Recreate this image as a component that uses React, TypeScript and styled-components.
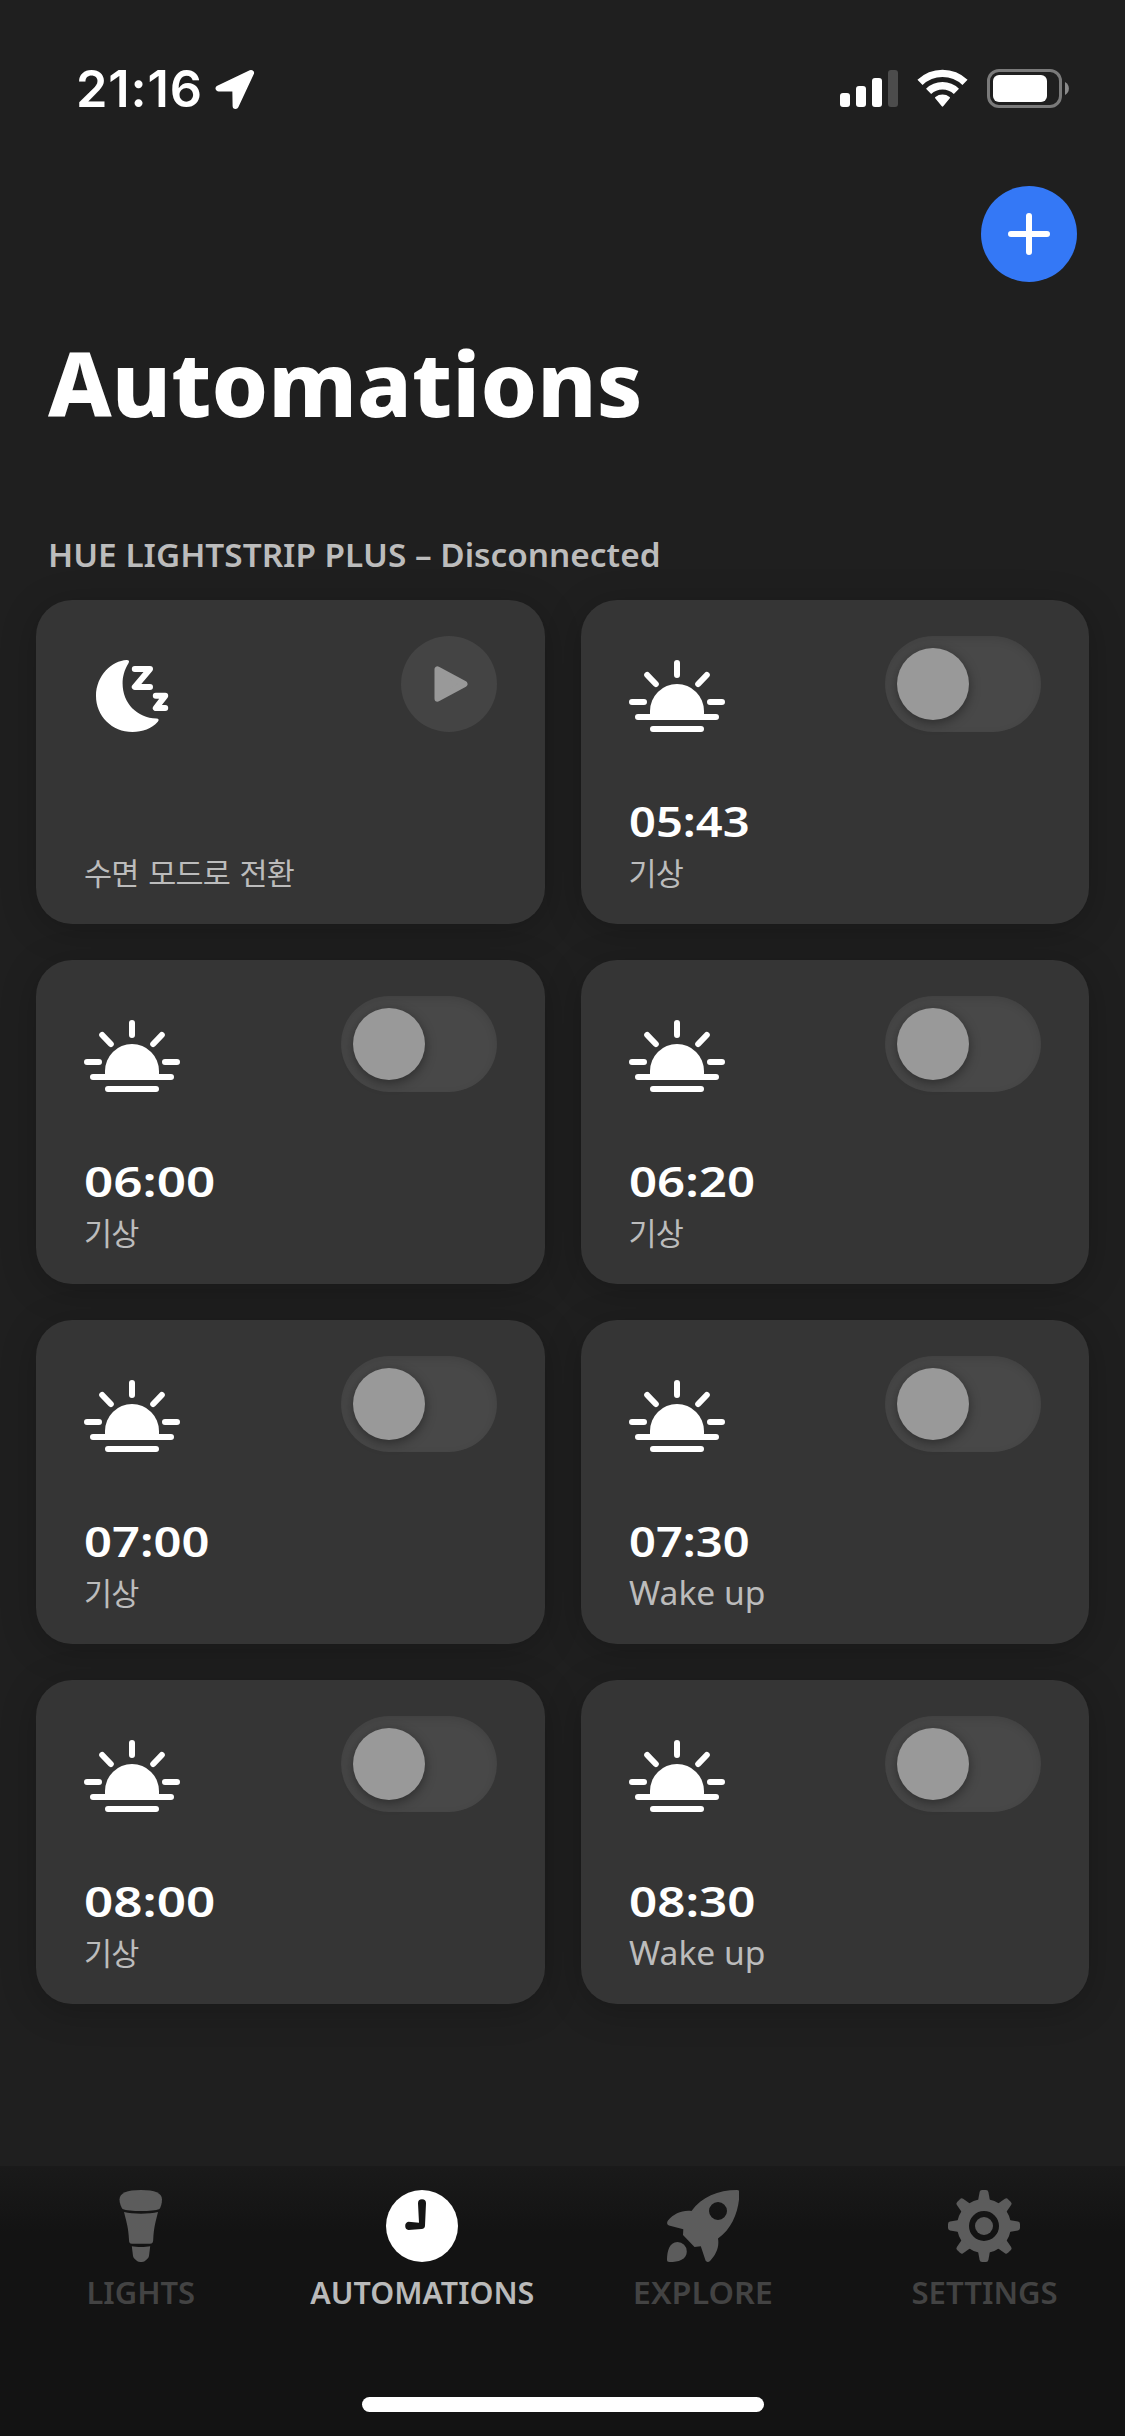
import React from "react";
import styled, { createGlobalStyle } from "styled-components";

const latin = `"Noto Sans", "Noto Sans CJK KR", sans-serif`;

const GlobalStyle = createGlobalStyle`
  * { box-sizing: border-box; }
  body { margin: 0; background: #1f1f1f; font-family: ${latin}; }
`;

const Screen = styled.div`
  display: flex;
  flex-direction: column;
  width: 1125px;
  height: 2436px;
  background: #1f1f1f;
  color: #fff;
  overflow: hidden;
`;

const StatusBar = styled.div`
  display: flex;
  align-items: center;
  justify-content: space-between;
  height: 132px;
  padding: 45px 56px 0 76px;
`;

const StatusLeft = styled.div`
  display: flex;
  align-items: center;
  height: 87px;
  gap: 13px;
`;

const Clock = styled.span`
  width: 126px;
  font-family: Inter, sans-serif;
  font-size: 50.5px;
  font-weight: 600;
  line-height: 87px;
  letter-spacing: 0.9px;
  white-space: nowrap;
`;

const StatusRight = styled.div`
  display: flex;
  align-items: center;
  height: 87px;
  gap: 19px;
`;

const Header = styled.div`
  display: flex;
  justify-content: flex-end;
  padding: 54px 48px 0;
`;

const AddButton = styled.button`
  display: grid;
  place-items: center;
  width: 96px;
  height: 96px;
  padding: 0;
  border: 0;
  border-radius: 50%;
  background: #3478f6;
`;

const Title = styled.h1`
  margin: 39px 48px 0;
  height: 122px;
  font-size: 90px;
  font-weight: 800;
  line-height: 122px;
  letter-spacing: 0.1px;
  white-space: nowrap;
`;

const SectionTitle = styled.h2`
  align-self: flex-start;
  margin: 88px 48px 0;
  height: 69px;
  font-size: 32px;
  font-weight: 600;
  line-height: 48px;
  color: #bcbcbc;
  white-space: nowrap;
  transform: scaleX(1.042);
  transform-origin: left;
`;

const Grid = styled.main`
  display: grid;
  grid-template-columns: 1fr 1fr;
  grid-auto-rows: 324px;
  gap: 36px;
  padding: 0 36px;
  flex: 1;
  align-content: start;
`;

const Card = styled.article`
  display: flex;
  flex-direction: column;
  justify-content: space-between;
  padding: 36px 48px 30px;
  border-radius: 36px;
  background: #353535;
  box-shadow: 0 6px 36px rgba(0, 0, 0, 0.22);
`;

const CardTop = styled.div`
  display: flex;
  justify-content: space-between;
  align-items: flex-start;
`;

const IconSlot = styled.div`
  display: flex;
  width: 96px;
  margin-top: 24px;
`;

const CardText = styled.div`
  display: flex;
  flex-direction: column;
  align-items: flex-start;
`;

const Time = styled.div<{ $stretch: number }>`
  height: 58px;
  font-size: 42px;
  font-weight: 600;
  line-height: 54px;
  transform: scaleX(${(p) => p.$stretch});
  transform-origin: left;
`;

const Label = styled.div<{ $korean: boolean }>`
  height: 42px;
  font-size: ${(p) => (p.$korean ? 30.5 : 32)}px;
  line-height: 42px;
  letter-spacing: ${(p) => (p.$korean ? -0.8 : 0)}px;
  word-spacing: ${(p) => (p.$korean ? 2.5 : 0)}px;
  color: #bcbcbc;
  white-space: nowrap;
  transform: ${(p) => (p.$korean ? "none" : "scaleX(1.05)")};
  transform-origin: left;
`;

const PlayButton = styled.button`
  display: grid;
  place-items: center;
  width: 96px;
  height: 96px;
  padding: 0;
  border: 0;
  border-radius: 50%;
  background: #444;
`;

const Toggle = styled.div`
  display: flex;
  align-items: center;
  width: 156px;
  height: 96px;
  padding: 12px;
  border-radius: 48px;
  background: #484848;
  box-shadow: inset 0 3px 9px rgba(0, 0, 0, 0.1);
`;

const Knob = styled.div`
  width: 72px;
  height: 72px;
  border-radius: 50%;
  background: #999;
  box-shadow: 0 3px 12px rgba(0, 0, 0, 0.4);
`;

const TabBar = styled.nav`
  display: grid;
  grid-template-columns: repeat(4, 1fr);
  height: 231px;
  padding-top: 24px;
  background: linear-gradient(#1a1a1a, #131313 66px);
`;

const Tab = styled.div<{ $active?: boolean }>`
  display: flex;
  flex-direction: column;
  align-items: center;
  gap: 11px;
  color: ${(p) => (p.$active ? "#fff" : "#5c5c5c")};
`;

const TabLabel = styled.span<{ $active?: boolean; $stretch: number }>`
  font-size: 30px;
  font-weight: 600;
  line-height: 40px;
  transform: scaleX(${(p) => p.$stretch});
  color: ${(p) => (p.$active ? "#bababa" : "#434343")};
`;

const HomeArea = styled.div`
  display: flex;
  justify-content: center;
  height: 39px;
  background: #131313;
`;

const HomeIndicator = styled.div`
  width: 402px;
  height: 15px;
  border-radius: 8px;
  background: #fff;
`;

const LocationIcon = () => (
  <svg width="40" height="40" viewBox="0 0 40 40" fill="#fff" stroke="#fff" strokeWidth="6" strokeLinejoin="round">
    <path d="M36 4 L3.6 19.5 L20.3 19.5 L20.6 37 Z" />
  </svg>
);

const SignalIcon = () => (
  <svg width="58" height="39" viewBox="0 0 58 39" fill="#fff">
    <rect x="0" y="24" width="10" height="14" rx="3" />
    <rect x="16" y="17" width="10" height="21" rx="3" />
    <rect x="32" y="9" width="10" height="29" rx="3" />
    <rect x="48" y="1" width="10" height="37" rx="3" fill="#4c4c4c" />
  </svg>
);

const WifiIcon = () => (
  <svg width="51" height="39" viewBox="0 0 51 39" fill="none">
    <path d="M3 13.4 A32.5 32.5 0 0 1 48 13.4" stroke="#fff" strokeWidth="7.4" />
    <path d="M11.6 22.3 A20 20 0 0 1 39.4 22.3" stroke="#fff" strokeWidth="7.4" />
    <path d="M18.2 29.2 Q17.6 28.5 18.4 27.9 A11.8 11.8 0 0 1 32.6 27.9 Q33.4 28.5 32.8 29.2 L26.2 37.3 Q25.5 38.2 24.8 37.3 Z" fill="#fff" />
  </svg>
);

const BatteryIcon = () => (
  <svg width="82" height="39" viewBox="0 0 82 39">
    <rect x="1.5" y="1.5" width="72" height="36" rx="10.5" fill="none" stroke="#7a7a7a" strokeWidth="3" />
    <rect x="6" y="6" width="54" height="27" rx="6" fill="#fff" />
    <path d="M78 13 A7.4 7.4 0 0 1 78 26 Z" fill="#8a8a8a" />
  </svg>
);

const PlusIcon = () => (
  <svg width="42" height="42" viewBox="0 0 42 42" stroke="#fff" strokeWidth="6" strokeLinecap="round">
    <path d="M21 3V39M3 21H39" />
  </svg>
);

const MoonIcon = () => (
  <svg width="96" height="72" viewBox="0 0 96 72" fill="none">
    <path
      d="M42.6 0 C45 0 45.6 1 44.6 3 C40 10.5 38.6 17 38.6 23.5 C38.6 43 53 58 72.5 58.6 C74.8 58.7 75.3 60 73.8 61.8 C67.6 68.6 58.6 72 48.5 72 C28 72 12 56 12 36 C12 15.6 28 0.6 42.6 0 Z"
      fill="#fff"
    />
    <path d="M50.8 9H66L50.8 27H66" stroke="#fff" strokeWidth="6" strokeLinejoin="round" strokeLinecap="round" />
    <path d="M71.8 35.8H81.2L71.8 48H81.2" stroke="#fff" strokeWidth="6" strokeLinejoin="round" strokeLinecap="round" />
  </svg>
);

const SunIcon = () => (
  <svg width="96" height="72" viewBox="0 0 96 72" stroke="#fff" strokeWidth="6" strokeLinecap="round">
    <path d="M48 3V15M18.2 15L26.8 24M77.8 15L69.2 24M3 42H15M81 42H93M9 57H87M24 69H72" />
    <path d="M21 57V51A27 27 0 0 1 75 51V57Z" fill="#fff" stroke="none" />
  </svg>
);

const PlayIcon = () => (
  <svg width="42" height="42" viewBox="0 0 42 42" fill="#999" stroke="#999" strokeWidth="6" strokeLinejoin="round">
    <path d="M9.5 6.3V35.7L36.5 21Z" />
  </svg>
);

const LightIcon = () => (
  <svg width="72" height="72" viewBox="0 0 72 72" fill="currentColor">
    <path d="M36 0C50 0 57 3 57 9.5C57 13.5 55.8 16.8 54.5 19C51 20.4 44 21 36 21C28 21 21 20.4 17.5 19C16.2 16.8 14.5 13.5 14.5 9.5C14.5 3 22 0 36 0Z" />
    <path d="M19 22C28 24.3 44 24.3 53 22C50 34 48.8 38 48.2 50C48.2 52 47.4 53.8 45 53.8H27C24.6 53.8 24 52 24 50C23.4 38 22 34 19 22Z" />
    <path d="M26.8 56.3C32 57.2 40 57.2 45.2 56.3L44 66C43.6 68.4 41 70 39.6 71.2C38 72.3 34 72.3 32.4 71.2C31 70 28.4 68.4 28 66Z" />
  </svg>
);

const ClockIcon = () => (
  <svg width="72" height="72" viewBox="0 0 72 72">
    <circle cx="36" cy="36" r="36" fill="currentColor" />
    <path
      d="M32 13.2A4 4 0 0 1 40 13.2L39 35.5C39 37.8 37.8 38.9 35.5 39L22.5 40A4.2 4.2 0 0 1 22.5 31.8L33 32.8Z"
      fill="#151515"
    />
  </svg>
);

const RocketIcon = () => (
  <svg width="72" height="72" viewBox="0 0 72 72" fill="currentColor">
    <path
      fillRule="evenodd"
      d="M70 0C71.8 0 72.6 1 72.5 3C72 20 66 38 51 48.5C52.6 57.5 48.5 65 43 71C41.3 72.8 38.7 72 38.3 69.8L33.8 56.2L27.5 57L16 45L16.3 39.2L2 35.5C0 34.8 -0.6 32.8 1 30.5C7 23.5 15 20 24.5 21C34.5 7 51 0 70 0ZM51 12A9 9 0 1 0 51 30A9 9 0 1 0 51 12Z"
    />
    <path d="M10.5 52A9.4 9.4 0 0 1 19.8 61.4C19.8 69.5 11.5 72 2.5 72C0.8 72 0 71.4 0 69.6C0.3 61 2 52.5 10.5 52Z" />
  </svg>
);

const GearIcon = () => (
  <svg width="72" height="72" viewBox="0 0 72 72" fill="currentColor">
    <path fillRule="evenodd" d="M36 9A27 27 0 1 0 36 63A27 27 0 1 0 36 9ZM36 21A15 15 0 1 1 36 51A15 15 0 1 1 36 21Z" />
    <circle cx="36" cy="36" r="9" />
    {[0, 45, 90, 135, 180, 225, 270, 315].map((angle) => (
      <path key={angle} transform={`rotate(${angle} 36 36)`} d="M30 11L31.6 2Q32 0 34 0H38Q40 0 40.4 2L42 11Z" />
    ))}
  </svg>
);

const automations = [
  { time: "", label: "수면 모드로 전환", stretch: 1 },
  { time: "05:43", label: "기상", stretch: 1.12 },
  { time: "06:00", label: "기상", stretch: 1.22 },
  { time: "06:20", label: "기상", stretch: 1.17 },
  { time: "07:00", label: "기상", stretch: 1.165 },
  { time: "07:30", label: "Wake up", stretch: 1.12 },
  { time: "08:00", label: "기상", stretch: 1.22 },
  { time: "08:30", label: "Wake up", stretch: 1.175 },
];

const tabs = [
  { label: "LIGHTS", Icon: LightIcon, active: false, stretch: 1.03 },
  { label: "AUTOMATIONS", Icon: ClockIcon, active: true, stretch: 1.015 },
  { label: "EXPLORE", Icon: RocketIcon, active: false, stretch: 1.08 },
  { label: "SETTINGS", Icon: GearIcon, active: false, stretch: 1.035 },
];

const isKorean = (text: string) => /[가-힣]/.test(text);

export default function App() {
  return (
    <>
      <GlobalStyle />
      <Screen>
        <StatusBar>
          <StatusLeft>
            <Clock>21:16</Clock>
            <LocationIcon />
          </StatusLeft>
          <StatusRight>
            <SignalIcon />
            <WifiIcon />
            <BatteryIcon />
          </StatusRight>
        </StatusBar>
        <Header>
          <AddButton aria-label="Add">
            <PlusIcon />
          </AddButton>
        </Header>
        <Title>Automations</Title>
        <SectionTitle>HUE LIGHTSTRIP PLUS – Disconnected</SectionTitle>
        <Grid>
          {automations.map(({ time, label, stretch }, i) => (
            <Card key={i}>
              <CardTop>
                <IconSlot>{time ? <SunIcon /> : <MoonIcon />}</IconSlot>
                {time ? (
                  <Toggle>
                    <Knob />
                  </Toggle>
                ) : (
                  <PlayButton aria-label="Run">
                    <PlayIcon />
                  </PlayButton>
                )}
              </CardTop>
              <CardText>
                {time && <Time $stretch={stretch}>{time}</Time>}
                <Label $korean={isKorean(label)}>{label}</Label>
              </CardText>
            </Card>
          ))}
        </Grid>
        <TabBar>
          {tabs.map(({ label, Icon, active, stretch }) => (
            <Tab key={label} $active={active}>
              <Icon />
              <TabLabel $active={active} $stretch={stretch}>
                {label}
              </TabLabel>
            </Tab>
          ))}
        </TabBar>
        <HomeArea>
          <HomeIndicator />
        </HomeArea>
      </Screen>
    </>
  );
}
